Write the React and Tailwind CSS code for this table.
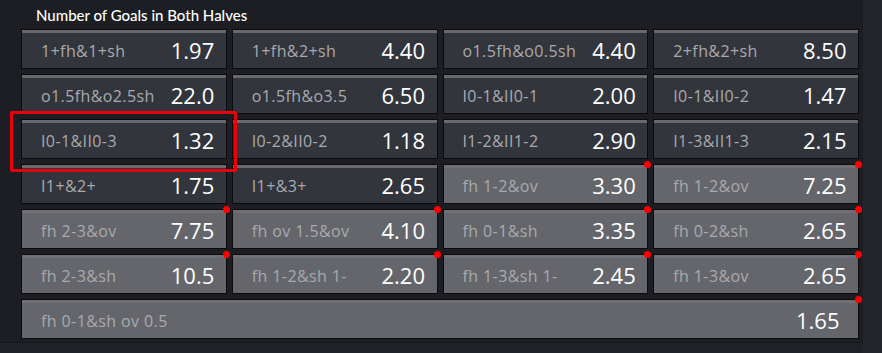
import React from 'react'

const cells = [
  { label: '1+fh&1+sh', odd: '1.97' },
  { label: '1+fh&2+sh', odd: '4.40' },
  { label: 'o1.5fh&o0.5sh', odd: '4.40' },
  { label: '2+fh&2+sh', odd: '8.50' },
  { label: 'o1.5fh&o2.5sh', odd: '22.0' },
  { label: 'o1.5fh&o3.5', odd: '6.50' },
  { label: 'I0-1&II0-1', odd: '2.00' },
  { label: 'I0-1&II0-2', odd: '1.47' },
  { label: 'I0-1&II0-3', odd: '1.32' },
  { label: 'I0-2&II0-2', odd: '1.18' },
  { label: 'I1-2&II1-2', odd: '2.90' },
  { label: 'I1-3&II1-3', odd: '2.15' },
  { label: 'I1+&2+', odd: '1.75' },
  { label: 'I1+&3+', odd: '2.65' },
  { label: 'fh 1-2&ov', odd: '3.30', light: true },
  { label: 'fh 1-2&ov', odd: '7.25', light: true },
  { label: 'fh 2-3&ov', odd: '7.75', light: true },
  { label: 'fh ov 1.5&ov', odd: '4.10', light: true },
  { label: 'fh 0-1&sh', odd: '3.35', light: true },
  { label: 'fh 0-2&sh', odd: '2.65', light: true },
  { label: 'fh 2-3&sh', odd: '10.5', light: true },
  { label: 'fh 1-2&sh 1-', odd: '2.20', light: true },
  { label: 'fh 1-3&sh 1-', odd: '2.45', light: true },
  { label: 'fh 1-3&ov', odd: '2.65', light: true },
  { label: 'fh 0-1&sh ov 0.5', odd: '1.65', light: true, wide: true },
]

function Cell({ label, odd, light, wide }) {
  return (
    <div
      className={
        'relative h-[40px] border border-[#0b0b0d] flex flex-col ' +
        (wide ? 'col-span-4 ' : '') +
        (light ? 'bg-[#64666c]' : 'bg-[#33353c]')
      }
    >
      <div className={'h-[3px] ' + (light ? 'bg-[#6e7075]' : 'bg-[#68696d]')} />
      <div className="flex-1 flex items-center pl-[19px] font-['Open_Sans',sans-serif]">
        <span className="flex-1 text-[16px] tracking-[0.4px] text-[#a9aaae]">{label}</span>
        <span className={'text-[22px] font-medium text-white ' + (wide ? 'w-[62px]' : 'w-[55px]')}>{odd}</span>
      </div>
      {light && (
        <span className="absolute -top-[4px] -right-[4px] w-[7px] h-[7px] rounded-full bg-[#ff0000]" />
      )}
    </div>
  )
}

export default function App() {
  return (
    <div className="flex w-[882px] h-[353px] bg-[#1f2229] font-['Lato',sans-serif]">
      <div className="relative w-[863px] flex flex-col">
        <div className="h-[343px] bg-[#1c1e24] border-b border-[#15171b] pl-[21px]">
          <div className="h-[29px] pl-[15px] pt-[4px] text-[15px] text-white font-medium">
            Number of Goals in Both Halves
          </div>
          <div className="grid grid-cols-4 gap-[5px] w-[838px]">
            {cells.map((c, i) => (
              <Cell key={i} {...c} />
            ))}
          </div>
        </div>
        <div className="absolute left-[10px] top-[111px] w-[227px] h-[61px] border-[3px] border-[#e8000b] rounded-[2px]" />
      </div>
      <div className="flex-1 bg-[#23262d]" />
    </div>
  )
}
